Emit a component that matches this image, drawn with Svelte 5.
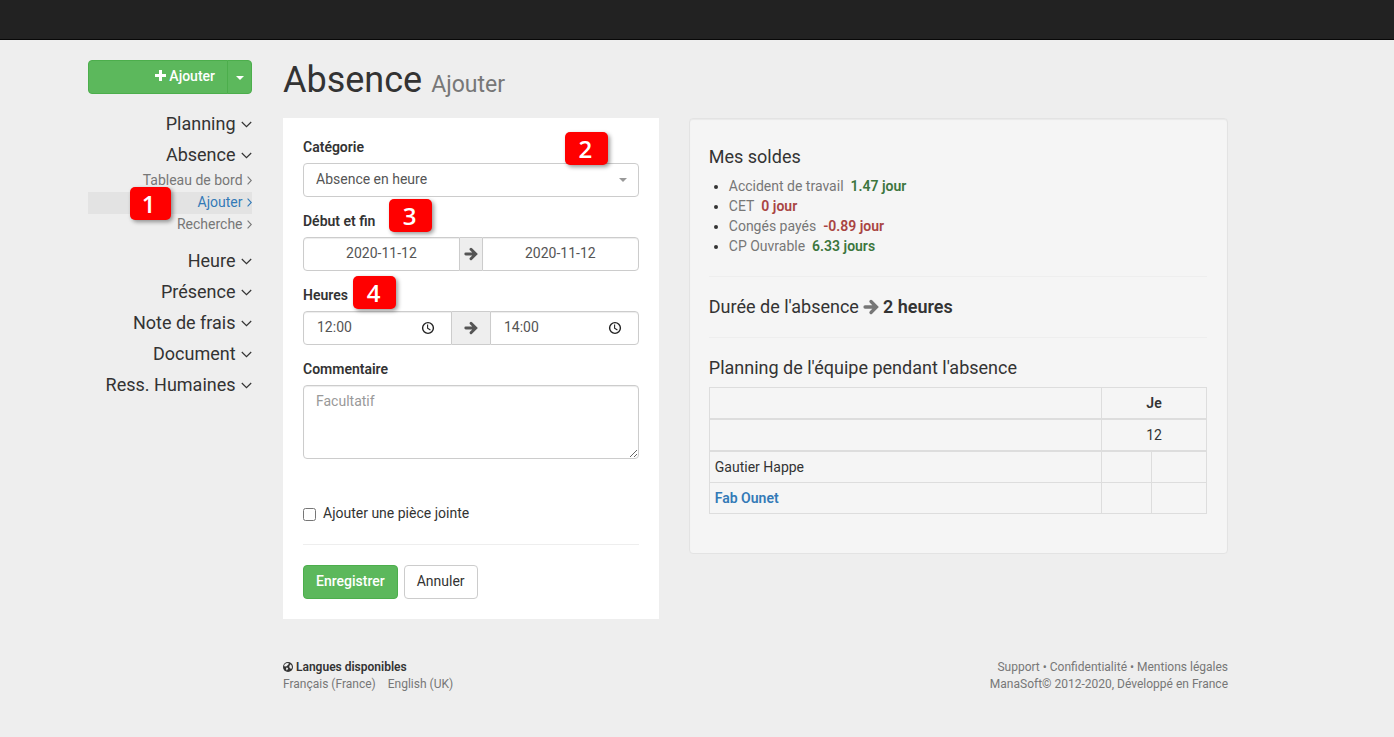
<script>
  const sections = [
    { title: 'Planning', items: [] },
    { title: 'Absence', items: ['Tableau de bord', 'Ajouter', 'Recherche'] },
    { title: 'Heure', items: [] },
    { title: 'Présence', items: [] },
    { title: 'Note de frais', items: [] },
    { title: 'Document', items: [] },
    { title: 'Ress. Humaines', items: [] }
  ];
  const active = 'Ajouter';

  const balances = [
    { name: 'Accident de travail', value: '1.47 jour', ok: true },
    { name: 'CET', value: '0 jour', ok: false },
    { name: 'Congés payés', value: '-0.89 jour', ok: false },
    { name: 'CP Ouvrable', value: '6.33 jours', ok: true }
  ];

  let start = $state('2020-11-12');
  let end = $state('2020-11-12');
  let from = $state('12:00');
  let to = $state('14:00');
  let comment = $state('');
  let attach = $state(false);
</script>

{#snippet arrow(size)}
  <svg class="arrow" width={size} height={size} viewBox="0 0 14 14" aria-hidden="true">
    <path d="M1.8 7H11.4M7 2.2L11.8 7L7 11.8" fill="none" stroke="currentColor" stroke-width="2.9" stroke-linecap="round" />
  </svg>
{/snippet}

{#snippet clock()}
  <svg width="14" height="14" viewBox="0 0 14 14" aria-hidden="true">
    <circle cx="7" cy="7" r="5.4" fill="none" stroke="#222" stroke-width="1.4" />
    <path d="M6.6 3.6V7.2L9.4 9" fill="none" stroke="#222" stroke-width="1.1" />
  </svg>
{/snippet}

<header class="topbar"></header>

<div class="container">
  <aside class="sidebar">
    <div class="split">
      <button type="button" class="btn success main">
        <svg width="11" height="11" viewBox="0 0 11 11" aria-hidden="true"><path d="M4 0h3v4h4v3H7v4H4V7H0V4h4z" fill="currentColor" /></svg>
        Ajouter
      </button>
      <button type="button" class="btn success toggle" aria-label="Plus d'options">
        <svg width="8" height="4" viewBox="0 0 8 4" aria-hidden="true"><path d="M0 0H8L4 4Z" fill="currentColor" /></svg>
      </button>
    </div>

    <nav>
      {#each sections as section}
        <a class="section" href="#section">
          {section.title}
          <svg width="11" height="7" viewBox="0 0 11 7" aria-hidden="true"><path d="M0.8 1L5.5 5.6L10.2 1" fill="none" stroke="currentColor" stroke-width="1.2" /></svg>
        </a>
        {#if section.items.length}
          <ul class="sub">
            {#each section.items as item}
              <li class:active={item === active}>
                <a href="#item">
                  {item}
                  <svg width="5" height="9" viewBox="0 0 5 9" aria-hidden="true"><path d="M0.6 0.7L4.3 4.5L0.6 8.3" fill="none" stroke="currentColor" stroke-width="1.1" /></svg>
                </a>
                {#if item === active}<span class="step s1">1</span>{/if}
              </li>
            {/each}
          </ul>
        {/if}
      {/each}
    </nav>
  </aside>

  <main>
    <h1>Absence <small>Ajouter</small></h1>

    <div class="columns">
      <form class="card" onsubmit={(e) => e.preventDefault()}>
        <div class="group">
          <label for="category">Catégorie</label>
          <span class="step s2">2</span>
          <div class="select">
            <select id="category" class="control">
              <option>Absence en heure</option>
            </select>
            <svg width="8" height="4" viewBox="0 0 8 4" aria-hidden="true"><path d="M0 0H8L4 4Z" fill="#999" /></svg>
          </div>
        </div>

        <div class="group">
          <label for="start">Début et fin</label>
          <span class="step s3">3</span>
          <div class="range dates">
            <input id="start" class="control" type="text" bind:value={start} />
            <span class="addon">{@render arrow(14)}</span>
            <input class="control" type="text" aria-label="Date de fin" bind:value={end} />
          </div>
        </div>

        <div class="group">
          <label for="from">Heures</label>
          <span class="step s4">4</span>
          <div class="range times">
            <div class="time">
              <input id="from" class="control" type="text" bind:value={from} />
              <button type="button" aria-label="Choisir l'heure de début">{@render clock()}</button>
            </div>
            <span class="addon">{@render arrow(14)}</span>
            <div class="time">
              <input class="control" type="text" aria-label="Heure de fin" bind:value={to} />
              <button type="button" aria-label="Choisir l'heure de fin">{@render clock()}</button>
            </div>
          </div>
        </div>

        <div class="group">
          <label for="comment">Commentaire</label>
          <textarea id="comment" class="control" placeholder="Facultatif" bind:value={comment}></textarea>
        </div>

        <label class="check">
          <input type="checkbox" bind:checked={attach} />
          Ajouter une pièce jointe
        </label>

        <hr />

        <div class="actions">
          <button type="submit" class="btn success">Enregistrer</button>
          <button type="button" class="btn plain">Annuler</button>
        </div>
      </form>

      <section class="well">
        <h4>Mes soldes</h4>
        <ul class="balances">
          {#each balances as b}
            <li><span>{b.name}</span><strong class:ok={b.ok}>{b.value}</strong></li>
          {/each}
        </ul>
        <hr />
        <h4 class="duration">Durée de l'absence <i>{@render arrow(16)}</i> <strong>2 heures</strong></h4>
        <hr />
        <h4>Planning de l'équipe pendant l'absence</h4>
        <table>
          <colgroup><col /><col class="am" /><col class="pm" /></colgroup>
          <thead>
            <tr><th></th><th colspan="2">Je</th></tr>
            <tr><th></th><th class="day" colspan="2">12</th></tr>
          </thead>
          <tbody>
            <tr><td>Gautier Happe</td><td></td><td></td></tr>
            <tr><td><a href="#fab">Fab Ounet</a></td><td></td><td></td></tr>
          </tbody>
        </table>
      </section>
    </div>

    <footer>
      <div>
        <strong class="langs">
          <svg width="10" height="10" viewBox="0 0 10 10" aria-hidden="true">
            <circle cx="5" cy="5" r="5" fill="#333" />
            <path d="M1.2 3L3 1.2L5.4 1L5.8 2L4.6 3.2L3.6 4.2L2.6 4.6L1.2 4.2ZM3.4 5.4L5.2 6L4.6 7.6L3.8 8.6L3 7ZM7.6 2.2L8.6 3.6L9 5.4L8.2 7L7 6.2L6.2 5L6.6 3.6Z" fill="#eee" />
          </svg>
          Langues disponibles
        </strong>
        <div class="locales"><a href="#fr">Français (France)</a><a href="#en">English (UK)</a></div>
      </div>
      <div class="legal">
        <div><a href="#support">Support</a> • <a href="#privacy">Confidentialité</a> • <a href="#terms">Mentions légales</a></div>
        <div>ManaSoft© 2012-2020, Développé en France</div>
      </div>
    </footer>
  </main>
</div>

<style>
  :global(body) {
    background: #eee;
    color: #333;
    font: 14px/20px Roboto, sans-serif;
  }
  :global(*) { box-sizing: border-box; }
  a { color: inherit; text-decoration: none; }
  button, input, select, textarea { font: inherit; color: inherit; }
  strong, label, th { font-weight: 600; }
  h1, h4, ul { margin: 0; padding: 0; }
  hr { border: 0; border-top: 1px solid #eee; margin: 20px 0; }

  .topbar { height: 40px; background: #222; border-bottom: 1px solid #080808; }
  .container {
    display: grid;
    grid-template-columns: 2fr 10fr;
    max-width: 1170px;
    margin-left: 73px;
    padding-top: 20px;
  }
  .sidebar { padding: 0 16px 0 15px; }
  main { padding: 0 15px; }

  .btn {
    height: 34px;
    padding: 0 12px 2px;
    border: 1px solid #ccc;
    border-radius: 4px;
    background: #fff;
    line-height: 20px;
    cursor: pointer;
  }
  .success { background: #5cb85c; border-color: #4cae4c; color: #fff; font-weight: 500; }
  .split { display: flex; }
  .main { flex: 1; text-align: right; border-radius: 4px 0 0 4px; }
  .toggle { width: 25px; padding: 0; margin-left: -1px; border-radius: 0 4px 4px 0; }
  .toggle svg { vertical-align: middle; }

  nav { margin-top: 14px; text-align: right; }
  nav svg { margin-left: 1px; }
  .section { display: block; font-size: 18px; line-height: 31px; }
  .section svg { vertical-align: 2px; }
  .sub { list-style: none; margin-bottom: 9px; color: #777; line-height: 22px; }
  .sub li { position: relative; }
  .sub a { display: block; height: 22px; line-height: 20px; }
  .sub .active { background: #e3e3e3; color: #337ab7; }

  .step {
    position: absolute;
    width: 43px;
    height: 33px;
    padding-right: 2px;
    border-radius: 5px;
    background: #f00;
    box-shadow: 2px 2px 4px rgba(0, 0, 0, 0.4);
    color: #fff;
    font: 600 24px/33px "Open Sans", sans-serif;
    text-align: center;
    z-index: 1;
  }
  .s1 { left: 42px; top: -5px; width: 41px; padding-right: 4px; }
  .s2 { right: 31px; top: -6px; }
  .s3 { left: 86px; top: -13px; }
  .s4 { left: 50px; top: -10px; }

  h1 { font-size: 36px; font-weight: 400; line-height: 40px; margin-bottom: 18px; }
  h1 small { font-size: 23px; line-height: 24px; color: #777; }

  .columns { display: grid; grid-template-columns: calc(41.67% - 18px) 1fr; gap: 30px; align-items: start; }
  .card { background: #fff; padding: 20px; }
  .group { position: relative; margin-bottom: 15px; }
  .group label { display: table; line-height: 18px; margin-bottom: 7px; }
  .control {
    display: block;
    width: 100%;
    min-width: 0;
    height: 34px;
    margin: 0;
    padding: 0 12px 2px;
    border: 1px solid #ccc;
    border-radius: 4px;
    background: #fff;
    color: #555;
    box-shadow: inset 0 1px 1px rgba(0, 0, 0, 0.075);
  }
  .select { position: relative; }
  .select select { appearance: none; box-shadow: none; }
  .select svg { position: absolute; right: 12px; top: 15px; pointer-events: none; }
  .range { display: flex; }
  .dates .control { flex: 1; text-align: center; }
  .range > :first-child, .range > :first-child .control { border-radius: 4px 0 0 4px; }
  .range > :last-child, .range > :last-child .control { border-radius: 0 4px 4px 0; }
  .addon {
    display: flex;
    align-items: center;
    justify-content: center;
    border: solid #ccc;
    border-width: 1px 0;
    background: #eee;
    color: #555;
  }
  .dates .addon { width: 22px; }
  .times .addon { width: 38px; }
  .time { position: relative; flex: 1; }
  .time .control { padding: 0 13px 2px; }
  .time button { position: absolute; right: 17px; top: 10px; padding: 0; border: 0; background: none; line-height: 0; }
  textarea.control { height: 74px; padding: 5px 12px; resize: vertical; }
  textarea::placeholder { color: #999; }
  .check { display: flex; align-items: center; gap: 7px; height: 20px; margin-top: 45px; padding-bottom: 2px; font-weight: 400; }
  .check input { margin: 2px 0 0; width: 13px; height: 13px; }
  .actions { display: flex; gap: 6px; }

  .well {
    min-height: 436px;
    padding: 28px 20px 39px 19px;
    border: 1px solid #e3e3e3;
    border-radius: 4px;
    background: #f5f5f5;
    box-shadow: inset 0 1px 1px rgba(0, 0, 0, 0.05);
  }
  h4 { font-size: 18px; font-weight: 400; line-height: 20px; margin-bottom: 9px; }
  .duration { display: flex; align-items: center; gap: 4px; height: 20px; margin: 0; }
  .duration i { display: flex; color: #777; }
  .balances { padding-left: 20px; }
  .balances span { color: #777; margin-right: 7px; }
  .balances strong { color: #a94442; }
  .balances .ok { color: #3c763d; }

  table { width: 100%; border-collapse: collapse; table-layout: fixed; }
  .am { width: 50px; }
  .pm { width: 55px; }
  th, td { padding: 5px; border: 1px solid #ddd; text-align: left; line-height: 20px; }
  th { border-bottom-width: 2px; text-align: center; }
  .day { font-weight: 400; }
  td a { color: #337ab7; font-weight: 600; }

  footer { display: flex; justify-content: space-between; margin-top: 40px; padding-bottom: 40px; font-size: 12px; line-height: 17px; color: #777; }
  .langs { color: #333; }
  .langs svg { vertical-align: -1px; }
  .locales { display: flex; gap: 12px; }
  .legal { text-align: right; }
</style>
